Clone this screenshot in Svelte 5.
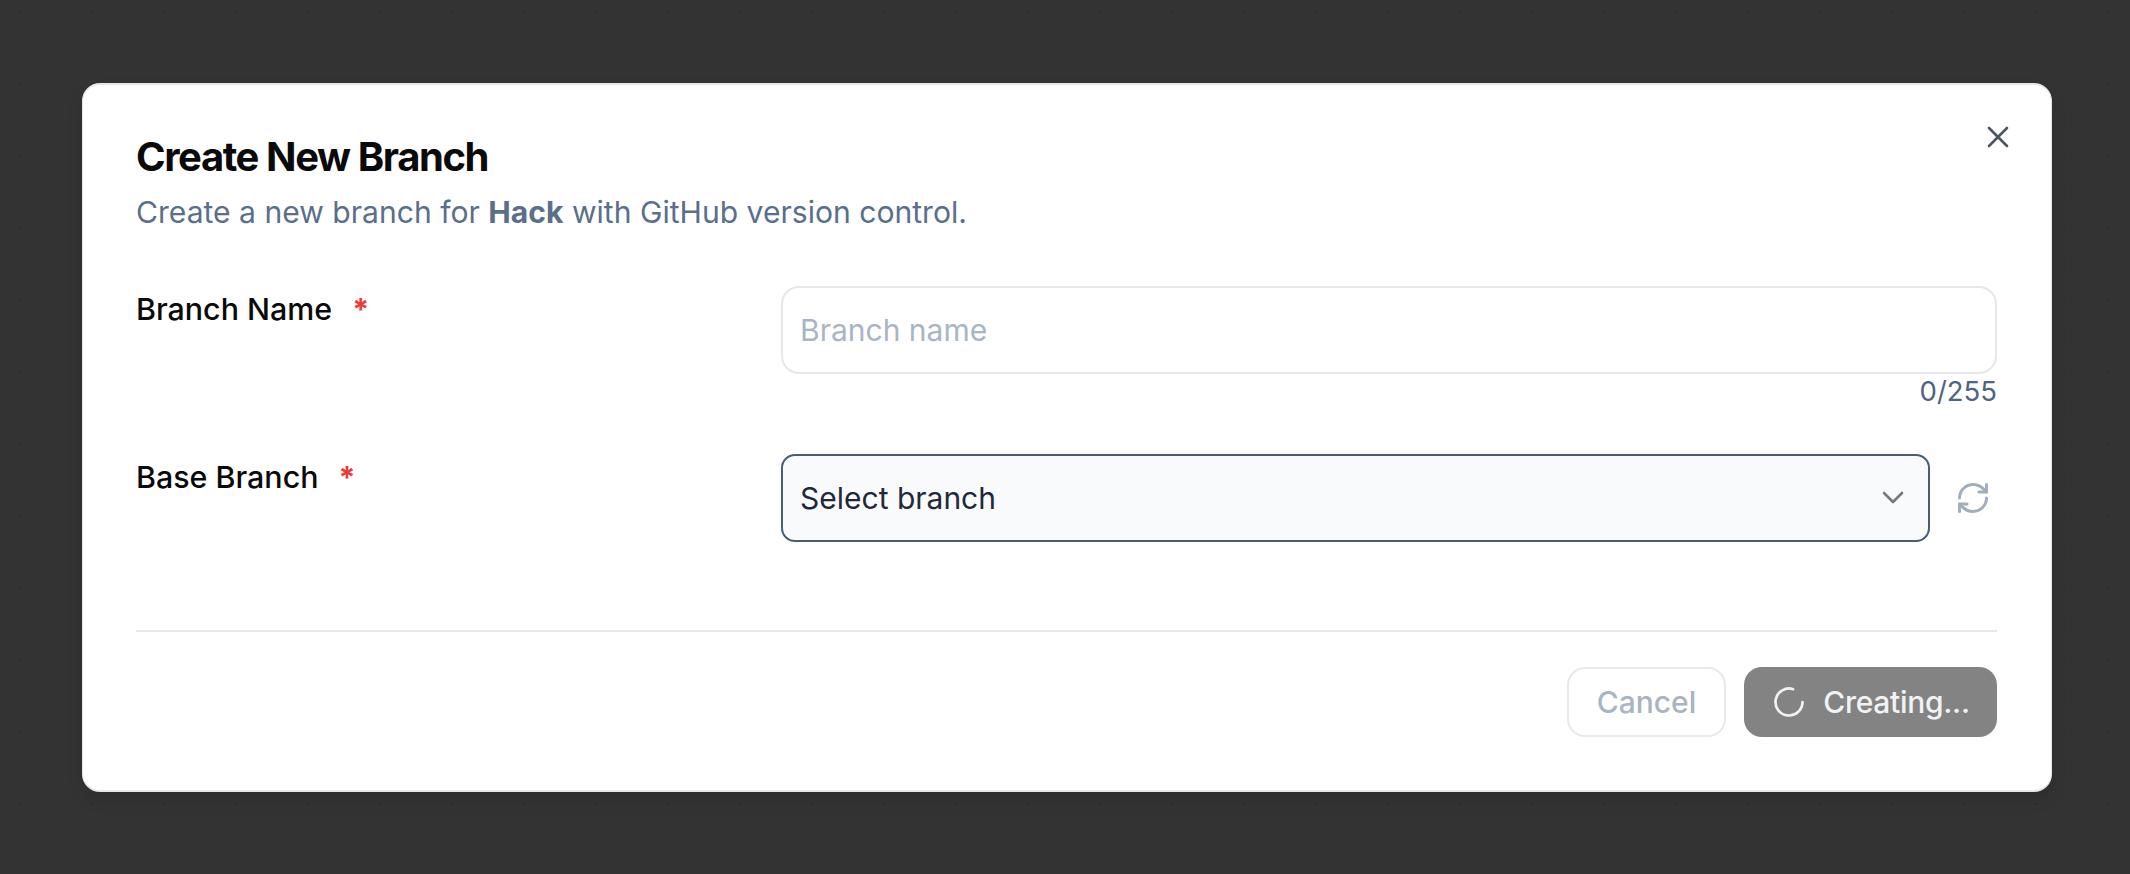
<script>
  let branchName = "";
  const maxLength = 255;
</script>

<div class="page">
  <div class="dialog">
    <button class="close" aria-label="Close">
      <svg width="24" height="24" viewBox="0 0 24 24" fill="none" stroke="currentColor" stroke-width="2.6" stroke-linecap="round"><path d="M3 3l18 18M21 3L3 21" /></svg>
    </button>

    <header class="head">
      <h2>Create New Branch</h2>
      <p>Create a new branch for <strong>Hack</strong> with GitHub version control.</p>
    </header>

    <div class="row first">
      <div class="label">Branch Name <span class="req">*</span></div>
      <div class="field">
        <input class="input" placeholder="Branch name" bind:value={branchName} />
        <div class="count">{branchName.length}/{maxLength}</div>
      </div>
    </div>

    <div class="row">
      <div class="label">Base Branch <span class="req">*</span></div>
      <div class="field inline">
        <div class="select">
          <span>Select branch</span>
          <svg width="22" height="14" viewBox="0 0 22 14" fill="none" stroke="#74777d" stroke-width="2.6" stroke-linecap="round" stroke-linejoin="round"><path d="M2 2l9 9 9-9" /></svg>
        </div>
        <svg class="refresh" width="36" height="36" viewBox="0 0 24 24" fill="none" stroke="#a3aebd" stroke-width="2" stroke-linecap="round" stroke-linejoin="round">
          <path d="M3 12a9 9 0 0 1 9-9 9.75 9.75 0 0 1 6.74 2.74L21 8" />
          <path d="M21 3v5h-5" />
          <path d="M21 12a9 9 0 0 1-9 9 9.75 9.75 0 0 1-6.74-2.74L3 16" />
          <path d="M8 16H3v5" />
        </svg>
      </div>
    </div>

    <footer class="foot">
      <button class="btn cancel">Cancel</button>
      <button class="btn creating">
        <svg width="36" height="36" viewBox="0 0 24 24" fill="none" stroke="#f1f2f4" stroke-width="1.8" stroke-linecap="round"><path d="M21 12a9 9 0 1 1-6.219-8.56" /></svg>
        Creating...
      </button>
    </footer>
  </div>
</div>

<style>
  :global(body) {
    margin: 0;
    background: #333;
  }

  .page {
    box-sizing: border-box;
    height: 874px;
    padding: 83px 78px 82px 82px;
    background-color: #333;
    background-image: radial-gradient(circle, #2c2c2c 1.2px, transparent 1.6px);
    background-size: 36px 36px;
    background-position: 2px -6px;
    font-family: Inter, "Liberation Sans", sans-serif;
  }

  .dialog {
    position: relative;
    box-sizing: border-box;
    height: 709px;
    padding: 48px 54px 53px 53px;
    background: #fff;
    border-radius: 18px;
    border: 2px solid #e5e7eb;
    border-width: 2px 1px 2px 1px;
    box-shadow: 0 8px 16px rgba(0, 0, 0, 0.1);
    display: flex;
    flex-direction: column;
  }

  .close {
    position: absolute;
    top: 40px;
    right: 41px;
    padding: 0;
    border: 0;
    background: none;
    color: #4b5563;
    display: flex;
  }

  h2 {
    margin: 0;
    font-size: 40px;
    line-height: 48px;
    font-weight: 700;
    letter-spacing: -1.4px;
    color: #0a0a0a;
  }

  .head p {
    margin: 11px 0 0;
    font-size: 30.1px;
    line-height: 40px;
    color: #5a6f8c;
  }

  .head strong {
    font-weight: 700;
  }

  .row {
    display: grid;
    grid-template-columns: 645px 1fr;
  }

  .row.first {
    margin-top: 54px;
    margin-bottom: 47px;
  }

  .label {
    font-size: 30.4px;
    line-height: 46px;
    font-weight: 500;
    color: #0a0a0a;
  }

  .req {
    margin-left: 12px;
    font-weight: 700;
    color: #f03a3a;
  }

  .input {
    display: block;
    box-sizing: border-box;
    width: 100%;
    height: 88px;
    padding: 0 17px;
    border: 2px solid #e5e7eb;
    border-radius: 18px;
    outline: none;
    font: inherit;
    font-size: 30px;
    color: #0a0a0a;
  }

  .input::placeholder {
    color: #a9b4c4;
  }

  .count {
    margin-top: 1px;
    text-align: right;
    font-size: 27.5px;
    line-height: 32px;
    color: #4d6482;
  }

  .inline {
    display: flex;
    align-items: center;
    gap: 25px;
  }

  .select {
    flex: 1;
    box-sizing: border-box;
    height: 88px;
    padding: 0 24px 0 17px;
    display: flex;
    align-items: center;
    justify-content: space-between;
    background: #f8fafc;
    border: 2px solid #475d78;
    border-radius: 14px;
    font-size: 30px;
    color: #1f2937;
  }

  .refresh {
    flex: none;
    margin-right: 6px;
  }

  .foot {
    margin-top: auto;
    padding-top: 35px;
    border-top: 2px solid #e5e7eb;
    display: flex;
    justify-content: flex-end;
    gap: 18px;
  }

  .btn {
    box-sizing: border-box;
    height: 70px;
    border-radius: 18px;
    font: inherit;
    font-size: 30px;
    font-weight: 500;
    display: flex;
    align-items: center;
    justify-content: center;
  }

  .cancel {
    width: 159px;
    background: #fff;
    border: 2px solid #e7e9ec;
    color: #a9b4c4;
  }

  .creating {
    width: 253px;
    gap: 16px;
    background: #838383;
    border: 0;
    letter-spacing: -0.3px;
    color: #f1f2f4;
  }
</style>
